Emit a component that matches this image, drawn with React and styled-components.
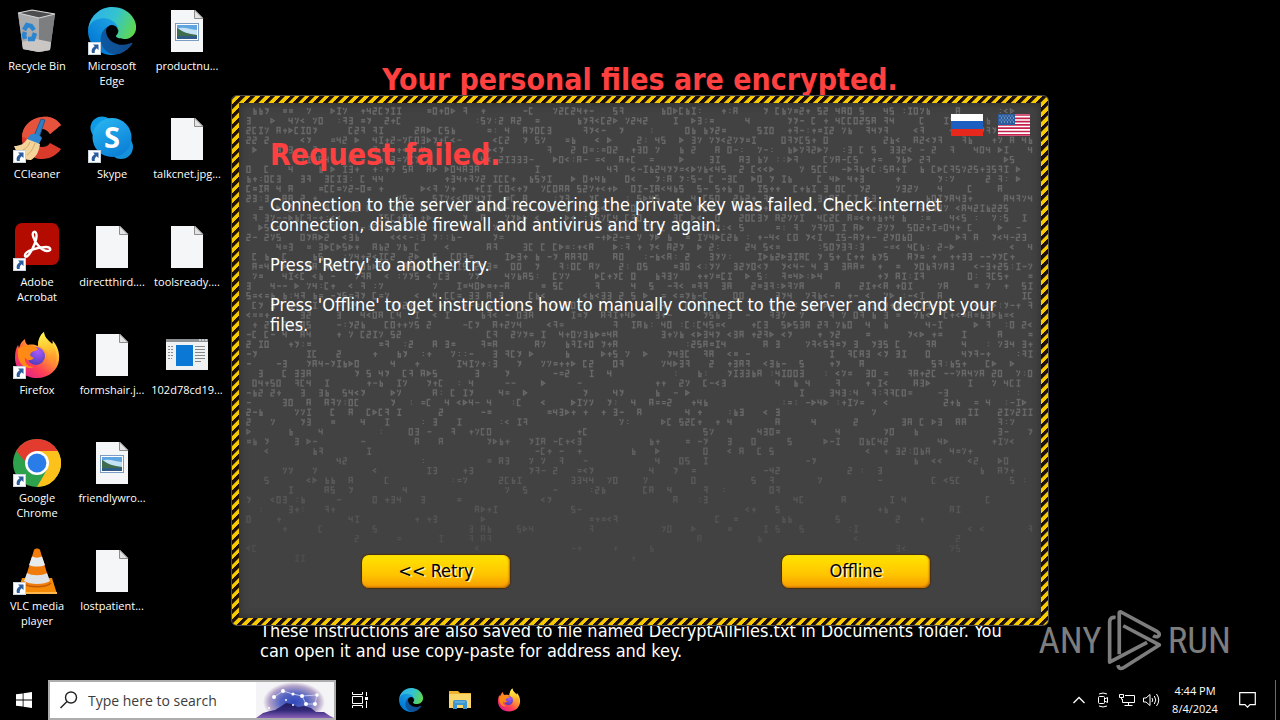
import React, { useState } from "react";
import styled, { createGlobalStyle } from "styled-components";

const dialogFont = `"DejaVu Sans Condensed", Tahoma, "DejaVu Sans", sans-serif`;
const systemFont = `"Segoe UI", "Open Sans", "Noto Sans", sans-serif`;

const shortcuts = [
  { label: "Recycle Bin", icon: "bin" },
  { label: "CCleaner", icon: "ccleaner", linked: true },
  { label: "Adobe Acrobat", icon: "acrobat", linked: true },
  { label: "Firefox", icon: "firefox", linked: true },
  { label: "Google Chrome", icon: "chrome", linked: true },
  { label: "VLC media player", icon: "vlc", linked: true },
  { label: "Microsoft Edge", icon: "edge", linked: true },
  { label: "Skype", icon: "skype", linked: true },
  { label: "directthird....", icon: "file" },
  { label: "formshair.j...", icon: "file" },
  { label: "friendlywro...", icon: "photo" },
  { label: "lostpatient...", icon: "file" },
  { label: "productnu...", icon: "photo" },
  { label: "talkcnet.jpg...", icon: "file" },
  { label: "toolsready....", icon: "file" },
  { label: "102d78cd19...", icon: "exe" },
];

/* ---------- icons ---------- */

const BinIcon = () => (
  <>
    <path d="M5 6L19 3l23 4-5 36-11 2-16-3z" fill="#8f9193" />
    <path d="M5 6l21 5 0 34-16-3z" fill="#a9abad" />
    <path d="M26 11l16-4-5 36-11 2z" fill="#7c7e80" />
    <path d="M9 35l14-3 15 3-1 8-11 2-16-3z" fill="#c9c6c3" />
    <path d="M5 6L19 3l23 4-16 4z" fill="#4b4d4f" stroke="#d5d7d8" strokeWidth="1.2" />
    <g fill="none" stroke="#2b84d0" strokeWidth="4.500">
      <path d="M11 23l3-5 4 1 3 4" />
      <path d="M22 26l-2 6-5 0" />
      <path d="M12 32l-1-4 1-3" />
    </g>
  </>
);

const CCleanerIcon = () => (
  <>
    <path
      d="M48 10C42 2 35 1 29 2 17 3 9 12 9 24s9 20 20 20c8 0 15-4 19-10l-11-6c-2 3-5 4-8 4-5 0-8-4-8-9s3-9 8-9c4 0 6 2 8 5z"
      fill="#d93a2a"
    />
    <path d="M29 2c-12 1-20 10-20 20l11 3c0-6 4-11 9-11 4 0 6 2 8 5l11-9C43 3 36 1 29 2z" fill="#e5533d" />
    <path d="M28 4l4 1-6 18-5-2z" fill="#2b7fc4" stroke="#1a4f86" strokeWidth="0.8" />
    <path d="M16 21c4-4 10-2 13 2l-3 6-12-4z" fill="#2f86cf" />
    <path d="M14 24l13 5c-1 8-4 13-9 16C12 46 4 40 1 31c6 0 10-2 13-7z" fill="#f3d59b" />
    <path d="M17 27c-2 5-5 7-9 9M22 28c-2 6-4 9-8 12" stroke="#d6a962" fill="none" />
  </>
);

const AcrobatIcon = () => (
  <>
    <rect x="2" width="44" height="42" rx="7" fill="#b30b00" />
    <path
      d="M12 33C14 36 19 28 22 20c3-8 1-12-1-11-3 1 0 8 3 12 3 4 7 7 10 7 5 0 4-4-1-4-8 0-22 4-21 9z"
      fill="none"
      stroke="#fff"
      strokeWidth="2.4"
      strokeLinejoin="round"
    />
  </>
);

const FirefoxIcon = () => (
  <>
    <defs>
      <linearGradient id="ffBase" x1="0.85" y1="0.1" x2="0.2" y2="0.95">
        <stop offset="0" stopColor="#fff44f" />
        <stop offset="0.35" stopColor="#ffa12c" />
        <stop offset="0.7" stopColor="#ff4055" />
        <stop offset="1" stopColor="#e0218a" />
      </linearGradient>
      <linearGradient id="ffFlame" x1="0.5" y1="0" x2="0.6" y2="1">
        <stop offset="0" stopColor="#fff44f" />
        <stop offset="0.5" stopColor="#ffc02e" />
        <stop offset="1" stopColor="#ff7139" stopOpacity="0.4" />
      </linearGradient>
      <radialGradient id="ffGlobe" cx="0.6" cy="0.25" r="0.8">
        <stop offset="0" stopColor="#a95bff" />
        <stop offset="1" stopColor="#4a3bb5" />
      </radialGradient>
    </defs>
    <path
      d="M12 8c0 3 1 5 3 6 4-1 8 0 10 1 0-6 2-11 6-14 0 5 4 8 8 12 1-1 1-2 0-4 5 5 8 12 7 20-1 10-10 18-22 18S2 39 2 27c0-6 1-10 3-13l1 3c1-4 3-7 6-9z"
      fill="url(#ffBase)"
    />
    <path d="M25 15c0-6 2-11 6-14 0 5 4 8 8 12 5 6 6 15 2 23-1-10-7-18-16-21z" fill="url(#ffFlame)" />
    <circle cx="23" cy="25" r="9" fill="url(#ffGlobe)" />
    <path d="M5 18c4-4 9-5 14-3 2 0 5 1 6 4-2 1-6 1-7 3-2 2 0 4 3 5-4 4-8 2-9-1-1 6 3 10 9 10-10 4-18-5-16-18z" fill="#ff8a16" />
  </>
);

const ChromeIcon = () => (
  <>
    <circle cx="24" cy="24" r="24" fill="#2da14c" />
    <path d="M24 24L3.200 12A24 24 0 0 1 44.800 12z" fill="#e33b2e" />
    <path d="M24 12h20.800A24 24 0 0 1 24 48l10.400-18z" fill="#fcc21b" />
    <path d="M3.200 12L13.600 30 24 24z" fill="#2da14c" />
    <path d="M3.200 12L24 12v12l-10.400 0z" fill="#e33b2e" />
    <circle cx="24" cy="24" r="12" fill="#fff" />
    <circle cx="24" cy="24" r="9.400" fill="#2a7de9" />
  </>
);

const VlcIcon = () => (
  <>
    <path d="M9 31h30l5 16H4z" fill="#f58a07" />
    <path d="M4 45h40v2H4z" fill="#ffb84d" />
    <path d="M21 3c1-2 5-2 6 0l10 33c0 5-26 5-26 0z" fill="#f07c0c" />
    <path d="M19 9.500c3 1.500 7 1.500 10 0l3 8.500c-4 2-12 2-16 0z" fill="#e9ecee" />
    <path d="M14 26c5 3 15 3 20 0l3 8c-6 4-20 4-26 0z" fill="#dfe3e6" />
    <path d="M10 36c5 5 23 5 28 0" fill="none" stroke="#c35a00" strokeWidth="1.500" />
  </>
);

const EdgeIcon = () => (
  <g transform="scale(0.1875)">
    <defs>
      <linearGradient id="edgeDeep" x1="0" y1="0.5" x2="1" y2="0.5">
        <stop offset="0" stopColor="#0c59a4" />
        <stop offset="1" stopColor="#114a8b" />
      </linearGradient>
      <linearGradient id="edgeBlue" x1="0.8" y1="0.2" x2="0.3" y2="0.9">
        <stop offset="0" stopColor="#1b9de2" />
        <stop offset="1" stopColor="#0078d4" />
      </linearGradient>
      <linearGradient id="edgeGreen" x1="0" y1="0.3" x2="1" y2="0.6">
        <stop offset="0" stopColor="#2fb0e8" />
        <stop offset="0.5" stopColor="#33c3d2" />
        <stop offset="1" stopColor="#5fd84f" />
      </linearGradient>
    </defs>
    <path
      d="M231 190.500c-3.400 1.800-6.900 3.400-10.500 4.700-11.500 4.300-23.600 6.500-35.900 6.500-47.300 0-88.500-32.500-88.500-74.300.1-11.400 6.400-21.900 16.400-27.300-42.800 1.800-53.800 46.400-53.800 72.500 0 73.900 68.100 81.400 82.800 81.400 7.900 0 19.800-2.300 27-4.600l1.300-.4c27.600-9.500 51-28.100 66.600-52.800 1.200-1.900.6-4.300-1.200-5.500-1.300-.8-2.900-.9-4.200-.2z"
      fill="url(#edgeDeep)"
    />
    <path
      d="M105.700 241.400c-8.900-5.500-16.600-12.800-22.700-21.300-26.300-36-18.400-86.500 17.600-112.800 3.800-2.700 7.700-5.200 11.900-7.200 3.100-1.500 8.400-4.100 15.500-4 10.100.1 19.600 4.900 25.700 13 4 5.400 6.300 11.900 6.400 18.700 0-.2 24.500-79.600-80-79.600-43.900 0-80 41.700-80 78.200-.2 19.300 4 38.500 12.100 56 27.600 58.800 94.800 87.600 156.400 67.100-21.100 6.600-44.100 3.700-62.900-8.100z"
      fill="url(#edgeBlue)"
    />
    <path
      d="M152.300 148.900c-.8 1-3.300 2.500-3.300 5.700 0 2.600 1.700 5.200 4.800 7.300 14.500 10.100 41.800 8.800 41.900 8.800 10.700 0 21.200-2.900 30.500-8.300 18.800-11 30.400-31.100 30.400-52.900.3-22.400-8-37.300-11.300-43.900C224 24 178.600 0 129.300 0 59.600-.1 2.500 56.200 1.600 126 2.100 89.500 38.400 60 81.700 60c3.500 0 23.500.3 42 10.100 16.300 8.600 24.900 18.900 30.800 29.200 6.200 10.700 7.300 24.200 7.300 29.600-.1 5.300-2.700 13.300-9.500 20z"
      fill="url(#edgeGreen)"
    />
  </g>
);

const SkypeIcon = () => (
  <>
    <defs>
      <linearGradient id="skypeFill" x1="0.2" y1="0" x2="0.7" y2="1">
        <stop offset="0" stopColor="#28b4f0" />
        <stop offset="1" stopColor="#0a7ed6" />
      </linearGradient>
    </defs>
    <circle cx="14" cy="13" r="11.500" fill="#0f9be6" />
    <circle cx="33" cy="32" r="12" fill="#1590dd" />
    <circle cx="24" cy="22.500" r="19.500" fill="url(#skypeFill)" />
    <text x="24" y="33" textAnchor="middle" fontFamily="Open Sans, sans-serif" fontWeight="700" fontSize="29" fill="#fff">
      S
    </text>
  </>
);

const Sheet = () => (
  <>
    <path d="M8 3h24l8 8v34H8z" fill="#f5f6f7" />
    <path d="M31.500 3v8.500H40z" fill="#e3e3e3" stroke="#8d8d8d" />
  </>
);

const PhotoIcon = () => (
  <>
    <Sheet />
    <rect x="12.500" y="16.500" width="23" height="17" fill="#fff" stroke="#7d9cc4" />
    <rect x="14" y="18" width="20" height="14" fill="#5fa5e0" />
    <path d="M14 22c6-3 12 0 20 1v5H14z" fill="#c5e2f4" />
    <path d="M14 21c5 3 8 5 14 6l6 1v1H14z" fill="#3f6b4e" />
    <path d="M14 29h20v3H14z" fill="#2f5c86" />
  </>
);

const ExeIcon = () => (
  <>
    <rect x="3" y="8" width="42" height="31" fill="#f0f1f2" />
    <path d="M3 8h42v3H3z" fill="#8e9193" />
    <path d="M36 9h2m1 0h2m1 0h2" stroke="#fff" />
    <rect x="13" y="14" width="17" height="21" fill="#0b78d6" />
    <path d="M5 15.500h6m-6 3h6m-6 3h6m-6 3h6m-6 3h4" stroke="#8a8d90" strokeDasharray="2 1" />
    <path d="M32 15.500h10m-10 3h10m-10 3h10m-10 3h10m-10 3h10m-10 3h6" stroke="#85888b" />
  </>
);

const icons = {
  bin: BinIcon,
  ccleaner: CCleanerIcon,
  acrobat: AcrobatIcon,
  firefox: FirefoxIcon,
  chrome: ChromeIcon,
  vlc: VlcIcon,
  edge: EdgeIcon,
  skype: SkypeIcon,
  file: Sheet,
  photo: PhotoIcon,
  exe: ExeIcon,
};

const AppIcon = ({ name, size = 48, linked }) => {
  const Shape = icons[name];
  return (
    <svg width={size} height={size} viewBox="0 0 48 48" aria-hidden="true">
      <Shape />
      {linked && (
        <>
          <rect x="0.500" y="35.500" width="12" height="12" fill="#fff" stroke="#c9d3dd" />
          <path d="M5 37.500h5.500V43L8.700 41.200C7 42.500 6.400 44 6.800 46H4c-1-3 .5-5.500 2.800-6.700z" fill="#2a5c9e" />
        </>
      )}
    </svg>
  );
};

/* ---------- faded symbol rain behind the dialog text ---------- */

const marks = [
  "m0 0h3v3h-3v3h3",
  "m3 0h-3v3h3v3h-3",
  "m0 0h3v6m0 -3h-3",
  "m0 0v3h3m0 -3v6",
  "m0 3h4",
  "m2 0v6m-2 0h4m-4 -6h4",
  "m3 1l-3 2l3 2",
  "m0 0h3v6h-3z",
  "m0 6v-6h3v6m-3 -3h3",
  "m0 0l3 3m0 -3v3l-2 3",
  "m2 1v5m-2 -3h4",
  "m3 0h-3v6h3",
  "m0 2h4m-4 2h4",
  "m1 0v6h2v-3h-2",
  "m0 0h3v6h-3m0 -3h3",
  "m0 1v4l3 -2z",
  "m0 0l1 2m2 -2v2l-2 4",
  "m2 1v1m0 2v1",
];

const buildRain = () => {
  let seed = 7;
  const rand = () => {
    seed = (seed * 16807) % 2147483647;
    return seed / 2147483647;
  };
  const rows = [];
  for (let r = 0; r < 47; r++) {
    const density = r < 18 ? 0.54 : Math.max(0.03, 0.52 - (r - 18) * 0.017);
    let d = "";
    let on = true;
    for (let c = 0; c < 131; c++) {
      if (rand() < 0.74) on = rand() < density;
      if (on) {
        d += `M${8 + c * 6} ${5 + r * 9.7}${marks[Math.floor(rand() * marks.length)]}`;
      }
    }
    rows.push({ d, opacity: r < 30 ? 1 : Math.max(0.3, 1 - (r - 30) * 0.045) });
  }
  return rows;
};

const rain = buildRain();

const FlagRu = () => (
  <svg width="32" height="22" viewBox="0 0 32 22" aria-hidden="true">
    <path d="M0 0h32v8H0z" fill="#fff" />
    <path d="M0 7h32v8H0z" fill="#1c5fc0" />
    <path d="M0 15h32v7H0z" fill="#e8281c" />
  </svg>
);

const FlagUs = () => (
  <svg width="32" height="22" viewBox="0 0 32 22" aria-hidden="true">
    <path d="M0 0h32v22H0z" fill="#fff" />
    <path
      d="M0 1h32M0 4.300h32M0 7.600h32M0 10.900h32M0 14.200h32M0 17.500h32M0 20.800h32"
      stroke="#c5204c"
      strokeWidth="1.700"
    />
    <path d="M0 0h17v11H0z" fill="#2b5c9c" />
    <path d="M1.500 2h15M3 4h13M1.500 6h15M3 8h13" stroke="#b8cbe4" strokeDasharray="1 2" />
  </svg>
);

/* ---------- page ---------- */

export default function App() {
  const [query, setQuery] = useState("");

  return (
    <>
      <GlobalStyle />
      <Screen>
        <Wallpaper>
          <Headline>Your personal files are encrypted.</Headline>
          <Note>
            These instructions are also saved to file named DecryptAllFiles.txt in Documents folder. You can open
            it and use copy-paste for address and key.
          </Note>
        </Wallpaper>

        <Shortcuts>
          {shortcuts.map((item) => (
            <Shortcut key={item.label} href="#">
              <AppIcon name={item.icon} linked={item.linked} />
              <span>{item.label}</span>
            </Shortcut>
          ))}
        </Shortcuts>

        <Hazard>
          <Panel>
            <Rain viewBox="0 0 801 514" preserveAspectRatio="xMinYMin slice" aria-hidden="true">
              {rain.map((row, i) => (
                <path key={i} d={row.d} opacity={row.opacity} />
              ))}
            </Rain>
            <Content>
              <Languages>
                <FlagButton aria-label="Русский">
                  <FlagRu />
                </FlagButton>
                <FlagButton aria-label="English">
                  <FlagUs />
                </FlagButton>
              </Languages>
              <Title>Request failed.</Title>
              <Message>
                Connection to the server and recovering the private key was failed. Check internet connection,
                disable firewall and antivirus and try again.
              </Message>
              <Message>Press 'Retry' to another try.</Message>
              <Message>
                Press 'Offline' to get instructions how to manually connect to the server and decrypt your files.
              </Message>
              <Actions>
                <YellowButton>&lt;&lt; Retry</YellowButton>
                <YellowButton>Offline</YellowButton>
              </Actions>
            </Content>
          </Panel>
        </Hazard>

        <Taskbar>
          <TaskButton $width={48} aria-label="Start">
            <svg width="16" height="16" viewBox="0 0 16 16" fill="#fff">
              <path d="M0 2.300L6.700 1.400V7.600H0zM7.500 1.200L16 0v7.600H7.500zM0 8.400h6.700v6.200L0 13.700zM7.500 8.400H16V16l-8.500-1.200z" />
            </svg>
          </TaskButton>
          <SearchBox>
            <svg width="18" height="18" viewBox="0 0 18 18" fill="none" stroke="#222" strokeWidth="1.400">
              <circle cx="11" cy="6.500" r="5.500" />
              <path d="M7 10.500L0.500 17" />
            </svg>
            <input
              type="text"
              aria-label="Type here to search"
              placeholder="Type here to search"
              value={query}
              onChange={(e) => setQuery(e.target.value)}
            />
            <SkyArt />
          </SearchBox>
          <TaskButton $width={48} aria-label="Task View">
            <svg width="17" height="16" viewBox="0 0 17 16" fill="none" stroke="#fff">
              <path d="M0.500 0v2.500h10V0M0.500 16v-2.500h10V16M0.500 4.500h10v7h-10zM14.500 0v4M14.500 9v7" />
              <path d="M13 5h3v3h-3z" fill="#fff" stroke="none" />
            </svg>
          </TaskButton>
          <TaskButton $width={54} aria-label="Microsoft Edge">
            <AppIcon name="edge" size={24} />
          </TaskButton>
          <TaskButton $width={44} aria-label="File Explorer">
            <svg width="22" height="20" viewBox="0 0 22 20">
              <path d="M0 1h9l2 2h11v15H0z" fill="#f2b32c" />
              <path d="M0 4h22v14H0z" fill="#fbd76b" />
              <path d="M4 19v-7q0-2 2-2h10q2 0 2 2v7h-4v-4H8v4z" fill="#3c96d0" />
              <path d="M6 12h10" stroke="#7cc0e8" />
            </svg>
          </TaskButton>
          <TaskButton $width={54} aria-label="Firefox">
            <AppIcon name="firefox" size={24} />
          </TaskButton>

          <Tray>
            <TrayButton aria-label="Show hidden icons">
              <svg width="12" height="8" viewBox="0 0 12 8" fill="none" stroke="#fff" strokeWidth="1.300">
                <path d="M0.500 7L6 1.500 11.500 7" />
              </svg>
            </TrayButton>
            <TrayButton aria-label="Meet Now">
              <svg width="12" height="16" viewBox="0 0 12 16" fill="none" stroke="#fff">
                <rect x="1.500" y="4.500" width="6" height="7" rx="1" />
                <path d="M7.500 7l3-1.500v5L7.500 9M2 2q4-2 8 0M2 14q4 2 8 0" />
              </svg>
            </TrayButton>
            <TrayButton aria-label="Network">
              <svg width="17" height="14" viewBox="0 0 17 14" fill="none" stroke="#fff">
                <path d="M6 2.500h9.500v7h-12V6M0.500 1.500h4v3h-4zM2.500 4.500v2M9.500 9.500v3M5.500 12.500h8" />
              </svg>
            </TrayButton>
            <TrayButton aria-label="Volume">
              <svg width="17" height="14" viewBox="0 0 17 14" fill="none" stroke="#fff">
                <path d="M0.500 5v4h2.500l4 3.500v-11L3 5z" />
                <path d="M9 5q1.500 2 0 4M11.300 3q3 4 0 8M13.500 1q4.500 6 0 12" />
              </svg>
            </TrayButton>
            <Clock>
              <time>4:44 PM</time>
              <time>8/4/2024</time>
            </Clock>
            <TrayButton $wide aria-label="Notifications">
              <svg width="17" height="16" viewBox="0 0 17 16" fill="none" stroke="#fff" strokeWidth="1.200">
                <path d="M0.700 0.700h15.600v12H11L8.500 15.200 6 12.700H0.700z" />
              </svg>
            </TrayButton>
            <PeekStrip />
          </Tray>
        </Taskbar>

        <Watermark>
          <span>ANY</span>
          <svg width="58" height="65" viewBox="235 25 175 195" fill="none" stroke="#7d7d7d" strokeWidth="11" strokeLinejoin="round">
            <path d="M264 53q-18-2-18 14V188L359 128" />
            <path d="M275 164V38q2-4 8 0L390 96q10 7 3 13-6 5-16-1" />
            <path d="M287 78L396 136 290 203q-16 10-19-6" />
          </svg>
          <span>RUN</span>
        </Watermark>
      </Screen>
    </>
  );
}

const SkyArt = () => (
  <svg width="78" height="36" viewBox="0 0 78 36" aria-hidden="true">
    <defs>
      <radialGradient id="sky" cx="0.5" cy="0.5" r="0.5">
        <stop offset="0" stopColor="#2f49bd" />
        <stop offset="0.45" stopColor="#5866c2" />
        <stop offset="0.8" stopColor="#b3a3c8" />
        <stop offset="1" stopColor="#f4f3f5" />
      </radialGradient>
      <linearGradient id="hill" x1="0" y1="0" x2="0" y2="1">
        <stop offset="0" stopColor="#1f1c5c" />
        <stop offset="0.5" stopColor="#33297a" />
        <stop offset="1" stopColor="#8a62b8" />
      </linearGradient>
    </defs>
    <path d="M0 0h78v36H0z" fill="#f4f3f5" />
    <ellipse cx="38" cy="20" rx="31" ry="20" fill="url(#sky)" />
    <path d="M0 36l7-5 7-2 5-1 5-3 6-4 6 1 6 3 6-1 7 2 5 4 8 0 6 4 4 2z" fill="url(#hill)" />
    <path d="M18 15l9-6 10 3 9 2 4 8 9 0 2-9M46 14l15-1" fill="none" stroke="#cfd8ff" strokeWidth="0.800" />
    <g fill="#fff">
      <circle cx="18" cy="15" r="2" />
      <circle cx="27" cy="9" r="2" />
      <circle cx="37" cy="12" r="1.600" />
      <circle cx="46" cy="14" r="2" />
      <circle cx="50" cy="22" r="2" />
      <circle cx="59" cy="22" r="2" />
      <circle cx="61" cy="13" r="1.800" />
      <circle cx="30" cy="18" r="1" />
      <circle cx="37" cy="23" r="1" />
      <circle cx="13" cy="26" r="1" />
    </g>
  </svg>
);

const GlobalStyle = createGlobalStyle`
  * {
    box-sizing: border-box;
  }
  body {
    margin: 0;
    background: #000;
    overflow: hidden;
  }
  button {
    font: inherit;
    color: inherit;
    background: none;
    border: none;
    padding: 0;
    cursor: pointer;
  }
  svg {
    display: block;
    flex: none;
  }
`;

/* every layer of the desktop shares the same grid cell */
const Screen = styled.main`
  display: grid;
  min-height: 100vh;
  color: #fff;
  font-family: ${systemFont};
  > * {
    grid-area: 1 / 1;
  }
`;

const Wallpaper = styled.section`
  display: flex;
  flex-direction: column;
  justify-content: space-between;
  justify-self: center;
  width: 100%;
  max-width: 760px;
  padding: 60px 0 59px;
  font-family: ${dialogFont};
`;

const Headline = styled.h1`
  margin: 0;
  font-size: 30px;
  line-height: 40px;
  text-align: center;
  color: #ff4040;
`;

const Note = styled.p`
  margin: 0;
  font-size: 18px;
  line-height: 20px;
`;

const Shortcuts = styled.nav`
  display: grid;
  grid-auto-flow: column;
  grid-template-rows: repeat(6, 108px);
  grid-auto-columns: 74px;
  column-gap: 1px;
  justify-self: start;
  align-self: start;
  padding-top: 7px;
`;

const Shortcut = styled.a`
  display: flex;
  flex-direction: column;
  align-items: center;
  gap: 3px;
  color: #fff;
  font-size: 11px;
  line-height: 15px;
  text-align: center;
  text-decoration: none;
`;

const Hazard = styled.section`
  display: grid;
  place-self: center;
  width: 818px;
  max-width: 100%;
  min-height: 531px;
  padding: 7px;
  border: 1px solid #4c4c4c;
  border-radius: 6px;
  background: repeating-linear-gradient(-45deg, #f8cb00 0 3px, #1c0f0c 4px 7px);
`;

const Panel = styled.div`
  display: grid;
  background: #424242;
  box-shadow: inset 0 0 8px #2a2a2a;
  > * {
    grid-area: 1 / 1;
  }
`;

const Rain = styled.svg`
  width: 100%;
  height: 100%;
  fill: none;
  stroke: #686868;
  stroke-width: 1.4px;
`;

const Content = styled.div`
  display: flex;
  flex-direction: column;
  padding: 11px 31px 30px;
  font-family: ${dialogFont};
  font-size: 18px;
  line-height: 20px;
`;

const Languages = styled.div`
  display: flex;
  justify-content: flex-end;
  gap: 15px;
  margin-right: -20px;
`;

const FlagButton = styled.button`
  width: 32px;
  height: 22px;
`;

const Title = styled.h2`
  margin: 0 0 21px;
  font-size: 30px;
  line-height: 38px;
  color: #ff4040;
`;

const Message = styled.p`
  margin: 0 0 20px;
`;

const Actions = styled.div`
  display: flex;
  justify-content: space-between;
  margin-top: auto;
  padding: 0 80px 0 92px;
`;

const YellowButton = styled.button`
  width: 148px;
  height: 33px;
  border-radius: 7px;
  color: #000;
  background: linear-gradient(#ffe500, #ffc400 60%, #f79a00);
  box-shadow: 0 0 1px 1px #4a2f10, inset -1px -1px 2px #b96a00;
  text-shadow: 2px 1px 0 #fff3c0;
`;

const Taskbar = styled.footer`
  display: flex;
  align-items: stretch;
  align-self: end;
  height: 40px;
  background: #000;
`;

const TaskButton = styled.button`
  display: flex;
  align-items: center;
  justify-content: center;
  width: ${(props) => props.$width}px;
`;

const SearchBox = styled.div`
  display: flex;
  align-items: center;
  gap: 10px;
  width: 288px;
  padding-left: 10px;
  border: 2px solid #adadad;
  background: #fff;
  input {
    flex: 1;
    min-width: 0;
    padding: 0;
    border: none;
    outline: none;
    background: none;
    font-family: ${systemFont};
    font-size: 14px;
    color: #222;
  }
  input::placeholder {
    color: #3c3c3c;
    opacity: 1;
  }
`;

const Tray = styled.div`
  display: flex;
  align-items: center;
  margin-left: auto;
`;

const TrayButton = styled.button`
  display: flex;
  align-items: center;
  justify-content: center;
  width: ${(props) => (props.$wide ? 40 : 24)}px;
  height: 40px;
`;

const Clock = styled.div`
  display: flex;
  flex-direction: column;
  width: 64px;
  font-size: 11px;
  line-height: 18px;
  text-align: center;
`;

const PeekStrip = styled.div`
  width: 5px;
  height: 40px;
  margin-left: 8px;
  border-left: 1px solid #6b6b6b;
`;

const Watermark = styled.div`
  display: flex;
  align-items: center;
  gap: 4px;
  place-self: end;
  margin: 0 49px 47px 0;
  color: #7d7d7d;
  font-family: "Roboto Condensed", "Liberation Sans Narrow", Roboto, sans-serif;
  font-size: 37px;
  line-height: 40px;
  pointer-events: none;
`;
